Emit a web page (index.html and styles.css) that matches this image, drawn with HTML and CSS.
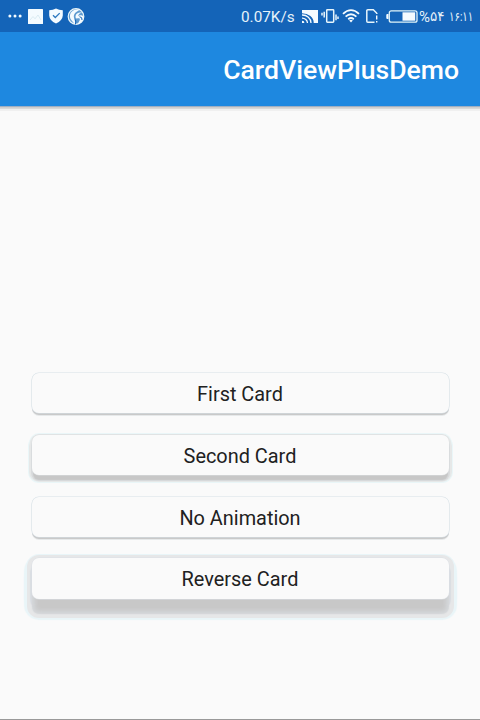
FILE: index.html
```html
<!DOCTYPE html>
<html lang="en">
<head>
<meta charset="utf-8">
<title>CardViewPlusDemo</title>
<link rel="stylesheet" href="styles.css">
</head>
<body>
<div class="screen">
  <div class="status">
    <div class="status-left">
      <svg class="dots" width="14" height="4" viewBox="0 0 14 4"><circle cx="1.9" cy="2" r="1.5"/><circle cx="7" cy="2" r="1.5"/><circle cx="12.1" cy="2" r="1.5"/></svg>
      <svg class="picture" width="15" height="15" viewBox="0 0 15 15"><rect width="15" height="15" rx=".6"/><path d="M2 11L5 7.5 7 9.8 10 6 13 11" fill="none" stroke="#d3e7ef" stroke-width=".8"/></svg>
      <svg class="shield" width="14" height="16" viewBox="0 0 14 16"><path d="M7 .5Q10 2.2 13.8 2.2V7.5Q13.5 12.5 7 15.6Q.5 12.5.2 7.5V2.2Q4 2.2 7 .5Z"/><path d="M4 7.2L6.3 9.5L10.7 5.1" fill="none" stroke="#2d79bf" stroke-width="1.3"/></svg>
      <svg class="swirl" width="18" height="19" viewBox="0 0 18 19"><circle cx="9" cy="9.5" r="7.8" fill="#5f9bd0" stroke="#e8f4f8" stroke-width="1.2"/><path d="M13.500 2.500C7 1.500 2.500 5 3 10C3.500 13.500 6.500 14.500 7.500 17.500C9.500 14.500 6 11.500 7 8C8 5 11 4 13.500 2.500Z"/><path d="M15.500 5.500C11 5 8 7 8.600 10.500C9.500 12.500 11.500 10.500 12.600 11.500C13.500 13.500 11.500 15 10.500 17.500C15 16 17.300 12 16.400 9C14.500 7.800 12 8.500 11 9.200C11.200 7.200 13 6.200 15.500 5.500Z"/><path d="M8.400 12.500Q9.300 15 8.300 17.500M12.500 9.700Q15.500 10 15 13" fill="none" stroke="#1464b8" stroke-width="1"/></svg>
    </div>
    <div class="status-right">
      <span class="speed">0.07K/s</span>
      <svg class="cast" width="16" height="13" viewBox="0 0 16 13"><path d="M0 0H16V13H11.700A11.700 9.500 0 0 0 0 3.200Z"/><path d="M0 5A8.700 8 0 0 1 9 13M0 8.100A5.300 5 0 0 1 5.500 13" fill="none" stroke="#f4fbff" stroke-width="1.300"/><path d="M0 10.700A2.300 2.300 0 0 1 2.400 13H0Z"/></svg>
      <svg class="vibrate" width="18" height="14" viewBox="0 0 18 14"><g fill="none" stroke="#e7f5fc" stroke-width="1.500"><rect x="5.700" y=".8" width="7" height="12.400" rx=".7"/><path d="M3.200 2.800V8.500M1 3.800V6.500M15 5.500V11.200M17 7.500V10"/></g></svg>
      <svg class="wifi" width="18" height="14" viewBox="0 0 18 14"><g fill="none" stroke="#f4fbff" stroke-width="1.800"><path d="M1 4.800Q9-2.500 17 4.800M3.600 7.600Q9 2.800 14.400 7.600M6.200 10.200Q9 7.800 11.800 10.200"/></g><path d="M7.200 11.400Q9 10.300 10.800 11.400L9 13.500Z"/></svg>
      <svg class="sim" width="12" height="14" viewBox="0 0 12 14"><path d="M10.800 4.300L7.300.8H1.800Q.8.800.8 1.800V12.200Q.8 13.200 1.800 13.200H8.500M10.800 4V5" fill="none" stroke="#e7f5fc" stroke-width="1.500"/><path d="M10 6.500H11.400V10.500H10ZM10 12H11.400V13.500H10Z"/></svg>
      <svg class="battery" width="32" height="13" viewBox="0 0 32 13"><rect x="3.300" y=".8" width="27.700" height="11.400" rx="2" fill="none" stroke="#e0f3f8" stroke-width="1.300"/><rect x="16.500" y="2.300" width="12.700" height="8.400"/><path d="M2.500 4H1.300Q.3 4 .3 5V8Q.3 9 1.300 9H2.500Z"/></svg>
      <span class="percent"><b>%</b><bdi>۵۴</bdi></span>
      <bdi class="clock">۱۶:۱۱</bdi>
    </div>
  </div>
  <header class="toolbar"><h1>CardViewPlusDemo</h1></header>
  <main class="cards">
    <div class="card low">First Card</div>
    <div class="card mid">Second Card</div>
    <div class="card low">No Animation</div>
    <div class="card high">Reverse Card</div>
  </main>
</div>
</body>
</html>
```
FILE: styles.css
```css
* { box-sizing: border-box; }
body { margin: 0; font-family: Roboto, "DejaVu Sans", sans-serif; }
.screen { width: 480px; height: 720px; display: flex; flex-direction: column; background: #fafafa; border-bottom: 1px solid #999; overflow: hidden; }
.status { flex: none; height: 32px; display: flex; justify-content: space-between; background: #1464b8; color: #e6f2fa; }
.status svg { fill: #f4fbff; flex: none; display: block; }
.status-left, .status-right { display: flex; align-items: center; height: 32px; }
.status-left { padding-left: 8px; }
.picture { margin-left: 6px; }
.shield { margin-left: 6px; }
.swirl { margin-left: 4px; }
.status-right { width: 239px; white-space: nowrap; }
.speed { width: 53px; font-size: 15.3px; line-height: 32px; padding-top: 1px; }
.cast { margin-left: 8px; }
.vibrate { margin-left: 3px; }
.wifi { margin-left: 3px; }
.sim { margin-left: 6px; }
.battery { margin-left: 8px; }
.percent { display: flex; align-items: center; width: 27px; margin-left: 1px; font-size: 13.5px; }
.percent b { font-weight: 400; font-size: 15px; width: 11px; padding-top: 1px; }
.clock { margin-left: 4px; font-size: 13px; transform: scaleX(.78); transform-origin: 0 50%; }
.toolbar { flex: none; height: 74px; padding-right: 21px; display: flex; align-items: center; justify-content: flex-end; background: #1e88e0; color: #fff; box-shadow: 0 1px 0 #9fafc3, 0 2px 0 #cfcfcf, 0 3px 0 #d8d8d8, 0 5px 0 #f0f0f0; }
.toolbar h1 { margin: 1px 0 0; font-size: 26.6px; font-weight: 500; line-height: 32px; }
.cards { display: flex; flex-direction: column; gap: 21.2px; padding: 267px 31.5px 0; }
.card { height: 40.6px; display: flex; align-items: center; justify-content: center; padding-top: 2px; border-radius: 7px; background: #fafafa; color: #212121; font-size: 19.9px; }
.low { height: 40px; margin-bottom: .6px; padding-top: 3px; box-shadow: 0 0 0 .6px #d5dfe5, 0 2px 0 0 #c9c9c9, 0 3px 0 0 #e6e9ea; }
.mid { box-shadow: 0 0 0 .5px #dadddf, 0 6px 1px -1px #c7c7c7, 0 5px 0 1px #d9dbdd, 0 4px 0 3px #e6e8e8, 0 1px 0 2px #e6e8e8, 0 4px 0 4px #eaf6f8, 0 1px 0 3px #eaf6f8; }
.high { box-shadow: 0 0 0 .5px #dce0e5, 0 15px 4px -3px #c8c8c8, 0 15px 1px 0 #d5d8db, 0 8px 1px 2px #d9dde2, 0 14px 0 5px #e6e7e8, 0 2px 0 5px #e6e7e8, 0 13px 1px 8px #e9f5f8, 0 6px 1px 8px #e9f5f8, 0 2px 0 6px #e9f5f8; }
```
